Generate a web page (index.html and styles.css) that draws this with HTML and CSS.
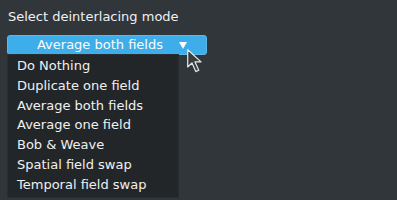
FILE: index.html
```html
<!DOCTYPE html>
<html lang="en">
<head>
    <meta charset="UTF-8">
    <title>Deinterlacing</title>
    <link rel="stylesheet" href="styles.css">
</head>
<body>
<div class="panel">
    <div class="label">Select deinterlacing mode</div>
    <div class="combo">
        <span class="combo-text">Average both fields</span>
        <span class="combo-arrow"></span>
    </div>
    <ul class="popup">
        <li>Do Nothing</li>
        <li>Duplicate one field</li>
        <li>Average both fields</li>
        <li>Average one field</li>
        <li>Bob &amp; Weave</li>
        <li>Spatial field swap</li>
        <li>Temporal field swap</li>
    </ul>
    <svg class="cursor" width="17" height="24" viewBox="0 0 17 24">
        <path d="M0.7 0.7 L0.7 18 L5 14 L8.8 22.6 L11.8 21.3 L8 12.9 L14 12.9 Z" fill="#3a3d40" stroke="#e8e8e8" stroke-width="1.2" stroke-linejoin="round"/>
    </svg>
</div>
</body>
</html>
```
FILE: styles.css
```css
*{
    margin: 0;
    padding: 0;
    list-style: none;
}
body{
    background: #31363b;
    font-family: "DejaVu Sans", sans-serif;
    font-size: 13px;
    color: #eff0f1;
    width: 397px;
    height: 200px;
    overflow: hidden;
}
.panel{
    position: relative;
    padding: 9px 0 0 7px;
}
.label{
    padding-left: 1px;
    line-height: 16px;
    height: 26px;
}
.combo{
    display: flex;
    align-items: center;
    width: 198px;
    height: 18px;
    background: #3daee9;
    border: 1px solid #5eb8e6;
    border-radius: 3px;
    color: #fcfcfc;
    line-height: 18px;
}
.combo-text{
    flex: 1;
    text-align: center;
    padding-left: 25px;
}
.combo-arrow{
    width: 0;
    height: 0;
    border-left: 4.5px solid transparent;
    border-right: 4.5px solid transparent;
    border-top: 7px solid #fcfcfc;
    margin: 0 19px 0 12px;
}
.popup{
    margin-left: 1px;
    width: 170px;
    height: 141px;
    padding-top: 1px;
    background: #232629;
    box-shadow: 0 0 0 1px #2a2e32;
}
.popup li{
    height: 19.8px;
    line-height: 20px;
    padding-left: 9px;
    white-space: nowrap;
}
.cursor{
    position: absolute;
    left: 187px;
    top: 49px;
}
```
